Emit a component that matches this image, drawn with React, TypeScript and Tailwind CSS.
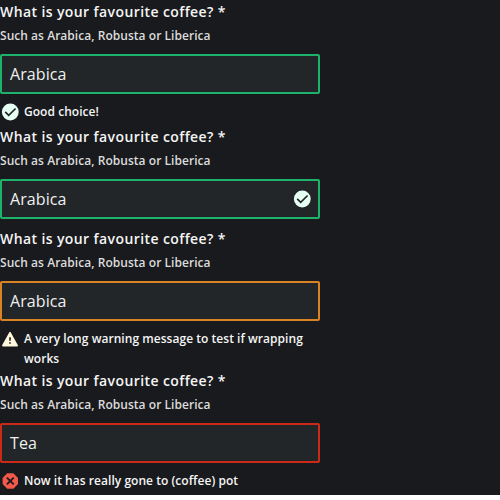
import React from "react";

type Variant = "success" | "warning" | "error";

const borders: Record<Variant, string> = {
  success: "border-[#1eb36a]",
  warning: "border-[#d98324]",
  error: "border-[#cc2a18]",
};

function StatusIcon({ variant }: { variant: Variant }) {
  if (variant === "success") {
    return (
      <svg viewBox="0 0 20 20" className="block size-5 shrink-0">
        <circle cx="10.3" cy="10" r="8.4" fill="#e6fff3" />
        <path d="M5.2 9.9 8.7 13.3 15.6 6.5" fill="none" stroke="#222628" strokeWidth="1.7" />
      </svg>
    );
  }
  if (variant === "warning") {
    return (
      <svg viewBox="0 0 20 20" className="block size-5 shrink-0">
        <path d="M10 3.7 17.2 16.6H2.8Z" fill="#fff8dc" stroke="#fff8dc" strokeWidth="1.6" strokeLinejoin="round" />
        <path d="M10 8.2V11.8M10 13.2V14.8" stroke="#222628" strokeWidth="1.7" />
      </svg>
    );
  }
  return (
    <svg viewBox="0 0 20 20" className="block size-5 shrink-0">
      <path d="M7.2 2.3H13.4L18 6.9V13.1L13.4 17.7H7.2L2.6 13.1V6.9Z" fill="#f2594b" />
      <path d="M6.9 6.6 13.7 13.4M13.7 6.6 6.9 13.4" stroke="#191a1d" strokeWidth="1.9" />
    </svg>
  );
}

interface FieldProps {
  variant: Variant;
  value: string;
  message?: string;
  className: string;
}

function Field({ variant, value, message, className }: FieldProps) {
  return (
    <div className={`w-80 ${className}`}>
      <label className="block pt-0.5 text-sm leading-5 font-semibold tracking-[0.4px]">
        What is your favourite coffee? *
      </label>
      <p className="mt-1 text-xs leading-5 font-semibold tracking-[0.04px] text-[#dcdcdc]">
        Such as Arabica, Robusta or Liberica
      </p>
      <div
        className={`mt-2 flex h-10 items-center justify-between rounded-[2px] border-2 bg-[#222628] pr-1.5 pl-2 text-base tracking-[0.08px] text-[#f0f0f0] ${borders[variant]}`}
      >
        <span>{value}</span>
        {!message && <StatusIcon variant={variant} />}
      </div>
      {message && (
        <div className="mt-2 flex gap-1 text-xs leading-5 font-semibold tracking-[0.04px]">
          <StatusIcon variant={variant} />
          <span>{message}</span>
        </div>
      )}
    </div>
  );
}

export default function App() {
  return (
    <main className="h-[495px] w-[500px] overflow-hidden bg-[#191a1d] font-['Open_Sans',sans-serif] text-[#f5f5f5]">
      <Field className="h-[125px]" variant="success" value="Arabica" message="Good choice!" />
      <Field className="h-[102px]" variant="success" value="Arabica" />
      <Field
        className="h-[142px]"
        variant="warning"
        value="Arabica"
        message="A very long warning message to test if wrapping works"
      />
      <Field className="h-[125px]" variant="error" value="Tea" message="Now it has really gone to (coffee) pot" />
    </main>
  );
}
